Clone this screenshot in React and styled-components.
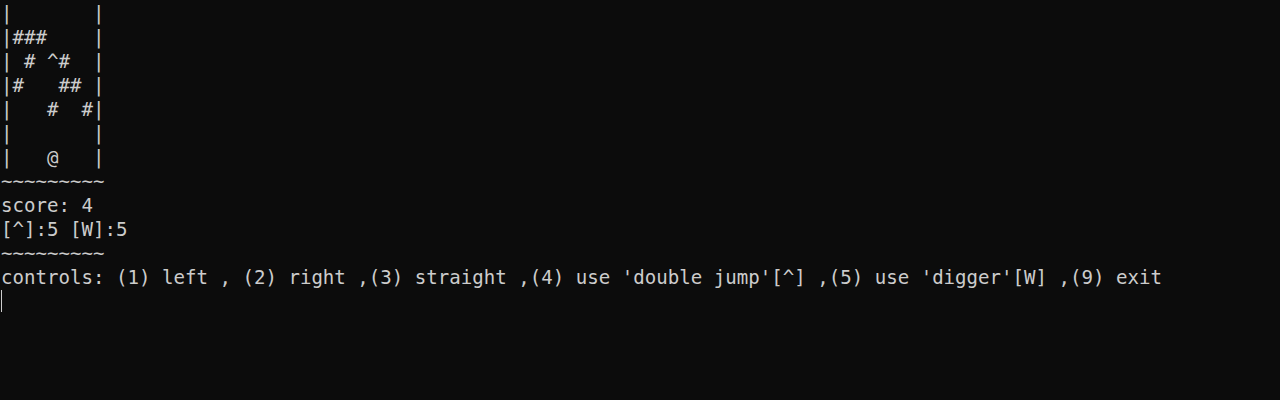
import React from 'react';
import styled, { createGlobalStyle } from 'styled-components';

const GlobalStyle = createGlobalStyle`
  html, body {
    margin: 0;
    padding: 0;
    background: #0c0c0c;
  }
`

const Terminal = styled.div`
  display: flex;
  flex-direction: column;
  width: 1280px;
  height: 400px;
  box-sizing: border-box;
  padding: 2px 0 0 1px;
  background: #0c0c0c;
  color: #cccccc;
  font-family: "DejaVu Sans Mono", "Liberation Mono", monospace;
  font-size: 19.1px;
  overflow: hidden;
`

const Line = styled.pre`
  margin: 0;
  height: 24px;
  line-height: 24px;
  font: inherit;
  white-space: pre;
`

const Cursor = styled.span`
  display: block;
  width: 1px;
  height: 22px;
  margin-top: 0px;
  background: #cccccc;
`

const lines = [
  '|       |',
  '|###    |',
  '| # ^#  |',
  '|#   ## |',
  '|   #  #|',
  '|       |',
  '|   @   |',
  '~~~~~~~~~',
  'score: 4',
  '[^]:5 [W]:5',
  '~~~~~~~~~',
  "controls: (1) left , (2) right ,(3) straight ,(4) use 'double jump'[^] ,(5) use 'digger'[W] ,(9) exit",
];

function App() {
  return (
    <>
      <GlobalStyle />
      <Terminal>
        {lines.map((l, i) => (
          <Line key={i}>{l}</Line>
        ))}
        <Cursor />
      </Terminal>
    </>
  )
}

export default App;
